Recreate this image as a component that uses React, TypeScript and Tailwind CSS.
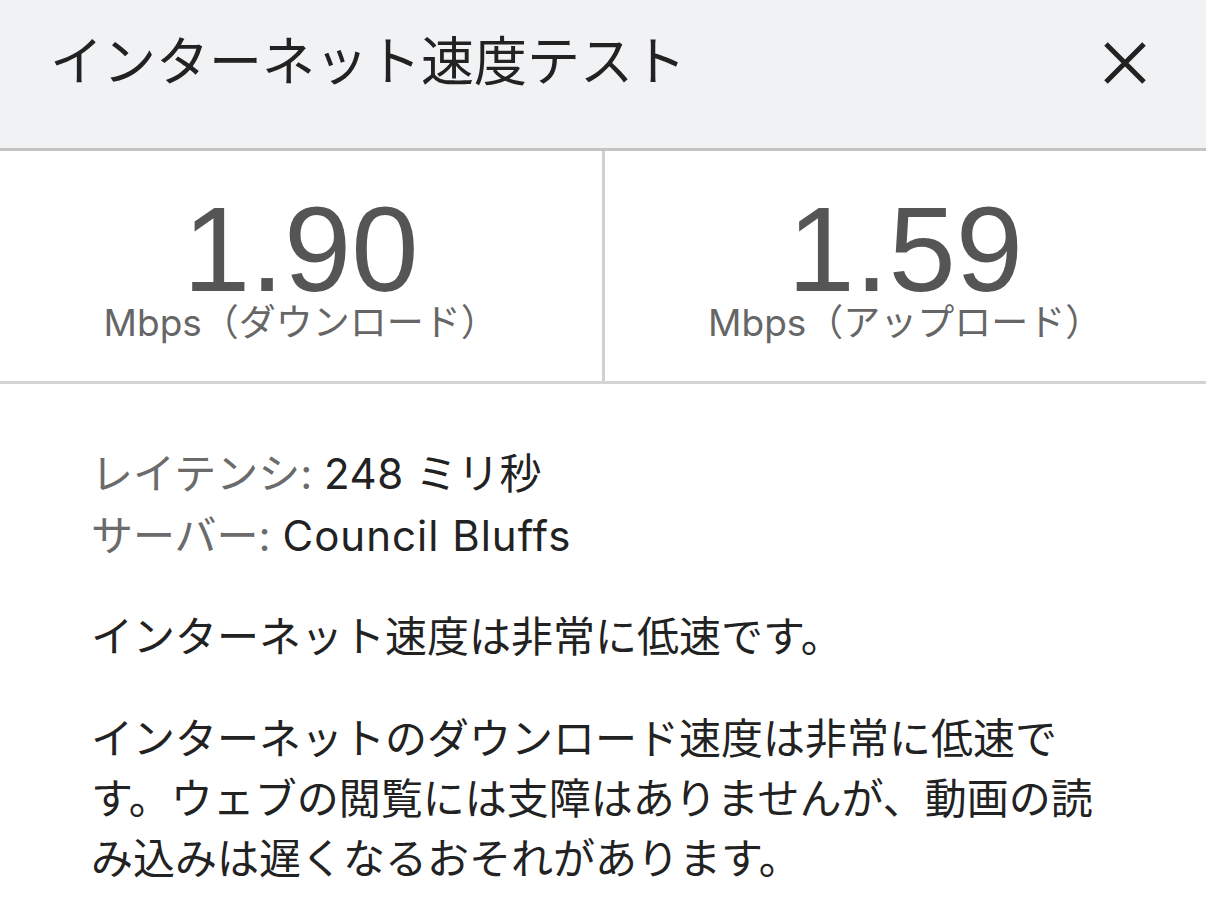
import React from 'react';

const sans = { fontFamily: 'Inter, "Noto Sans CJK JP", sans-serif' };

function Stat({ value, label }: { value: string; label: string }) {
  return (
    <div className="flex flex-1 flex-col items-center pt-[50px] pb-[38px]">
      <div
        className="text-[121px] leading-[96px] text-[#555]"
        style={{ fontFamily: '"Liberation Sans", sans-serif' }}
      >
        {value}
      </div>
      <div className="mt-[5px] text-[37px] leading-[41px] text-[#666]">{label}</div>
    </div>
  );
}

export default function App() {
  return (
    <div className="w-[1206px] h-[922px] bg-white overflow-hidden" style={sans}>
      {/* header */}
      <div className="flex h-[151px] items-start justify-between border-b-[3px] border-[#c4c4c4] bg-[#f1f2f4] pl-[50px] pr-[60px]">
        <h1 className="mt-[30px] text-[53px] leading-[64px] text-[#222]">インターネット速度テスト</h1>
        <svg className="mt-[42px]" width="42" height="42" viewBox="0 0 42 42">
          <path d="M2 2 L40 40 M40 2 L2 40" stroke="#222" strokeWidth="5" strokeLinecap="butt" />
        </svg>
      </div>

      {/* speeds */}
      <div className="flex border-b-[3px] border-[#d4d4d4]">
        <Stat value="1.90" label="Mbps（ダウンロード）" />
        <div className="w-[3px] bg-[#d0d0d0]" />
        <Stat value="1.59" label="Mbps（アップロード）" />
      </div>

      {/* details */}
      <div className="pl-[91px] pr-[93px] pt-[59px] text-[42px] text-[#222]">
        <div className="leading-[62px]">
          <span className="text-[#6b6b6b]">レイテンシ: </span>
          <span className="tracking-[0.5px]">248</span> ミリ秒
        </div>
        <div className="leading-[62px]">
          <span className="text-[#6b6b6b]">サーバー: </span>
          <span className="tracking-[1px]">Council Bluffs</span>
        </div>
        <p className="mt-[40px] leading-[60px]">インターネット速度は非常に低速です。</p>
        <p className="mt-[42px] leading-[60px]">
          インターネットのダウンロード速度は非常に低速です。ウェブの閲覧には支障はありませんが、動画の読み込みは遅くなるおそれがあります。
        </p>
      </div>
    </div>
  );
}
